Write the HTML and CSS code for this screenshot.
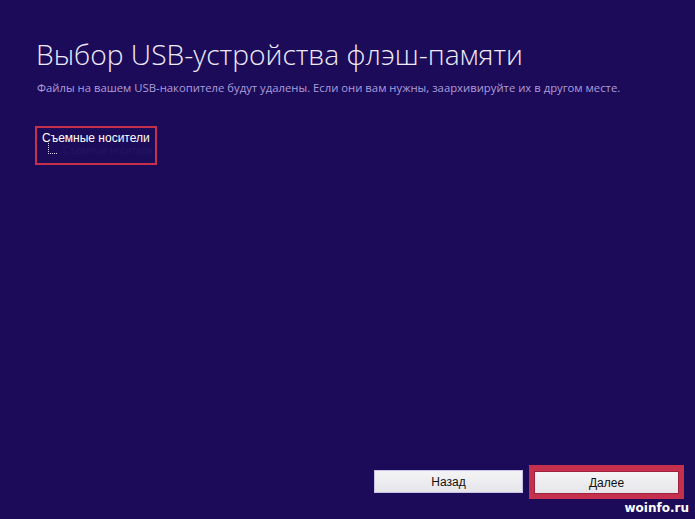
FILE: index.html
```html
<!DOCTYPE html>
<html lang="ru">
<head>
  <meta charset="UTF-8" />
  <title>Выбор USB-устройства флэш-памяти</title>
  <link rel="stylesheet" href="styles.css">
</head>
<body>
  <div class="okno">
    <div class="verh">
      <h1 class="zagolovok">Выбор USB-устройства флэш-памяти</h1>
      <p class="podskazka">Файлы на вашем USB-накопителе будут удалены. Если они вам нужны, заархивируйте их в другом месте.</p>

      <div class="vydelenie">
        <div class="derevo">
          <div class="uzel">Съемные носители</div>
          <div class="vetka">
            <span class="liniya"></span>
            <span class="skrytyj">Съемные носители</span>
          </div>
        </div>
      </div>
    </div>

    <div class="niz">
      <button class="knopka">Назад</button>
      <div class="ramka">
        <button class="knopka">Далее</button>
      </div>
    </div>
  </div>

  <div class="vodyanoj">woinfo.ru</div>
</body>
</html>
```

FILE: styles.css
```css
html, body {
  margin: 0;
  padding: 0;
  height: 100%;
  background: #1c0b58;
  font-family: "Open Sans", "Noto Sans", sans-serif;
  overflow: hidden;
}

.okno {
  height: 100%;
  display: flex;
  flex-direction: column;
  justify-content: space-between;
  box-sizing: border-box;
  padding: 35px 11px 20px 35px;
}

.zagolovok {
  margin: 0 0 0 1px;
  font-size: 28.2px;
  font-weight: 300;
  color: #eeeaf8;
  line-height: 38px;
}

.podskazka {
  margin: 8px 0 0 2px;
  font-size: 11.3px;
  color: #ab9ddc;
  line-height: 14px;
}

.vydelenie {
  margin-top: 31px;
  width: 113px;
  border: 2.5px solid #c5304c;
  padding: 3px 0 6px 5px;
}

.uzel {
  font-family: "Liberation Sans", Arial, sans-serif;
  font-size: 12px;
  color: #ffffff;
  line-height: 14px;
}

.vetka {
  display: flex;
  align-items: center;
  margin-left: 6px;
  height: 12px;
}

.liniya {
  width: 8px;
  height: 10px;
  margin-top: -6px;
  border-left: 1px dotted #d8d4ea;
  border-bottom: 1px dotted #d8d4ea;
}

.skrytyj {
  margin-left: 6px;
  font-family: "Liberation Sans", Arial, sans-serif;
  font-size: 10px;
  line-height: 12px;
  color: #231660;
}

.niz {
  display: flex;
  justify-content: flex-end;
  align-items: center;
  gap: 6px;
}

.knopka {
  width: 149px;
  height: 23px;
  border: 1px solid #c9c2e6;
  background: linear-gradient(#f4f4f6, #e6e6ea);
  font-family: "Liberation Sans", Arial, sans-serif;
  font-size: 12px;
  color: #111;
  padding: 0;
}

.ramka {
  border: 3px solid #c5304c;
  padding: 2px;
  background: #c5304c;
}

.ramka .knopka {
  width: 145px;
  border-color: #a02040;
}

.vodyanoj {
  position: absolute;
  right: 6px;
  bottom: 4px;
  font-family: "DejaVu Sans", sans-serif;
  font-weight: bold;
  font-size: 12px;
  color: #ffffff;
}
```
